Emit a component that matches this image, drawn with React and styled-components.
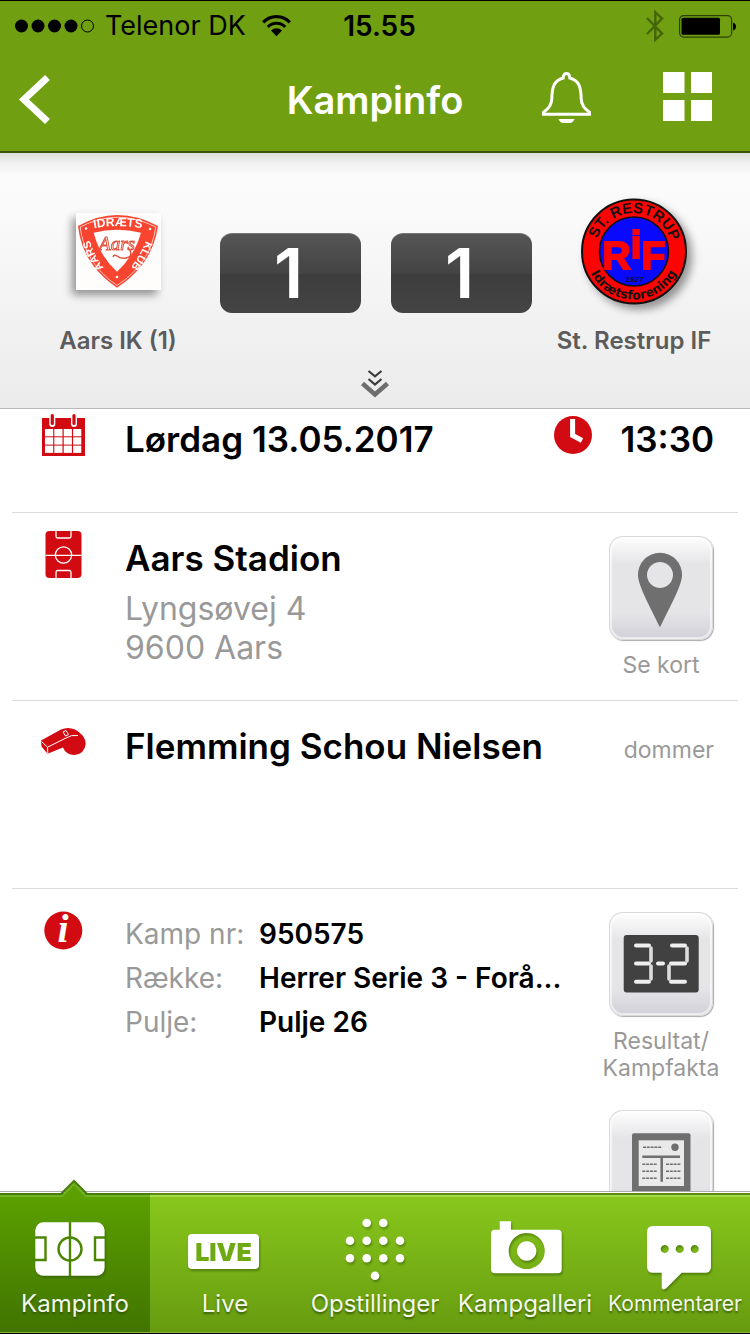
import React from "react";
import styled, { createGlobalStyle, css } from "styled-components";

const RED = "#d20a11";
const FONT = 'Inter, "Liberation Sans", sans-serif';

const GlobalStyle = createGlobalStyle`
  *, *::before, *::after { box-sizing: border-box; }
  body { margin: 0; background: #fff; font-family: ${FONT}; }
  button { font: inherit; color: inherit; border: 0; padding: 0; margin: 0; background: none; cursor: pointer; }
  h1, h2, p, dl, dd, dt { margin: 0; font-weight: inherit; font-size: inherit; }
  svg { display: block; overflow: visible; flex: none; }
`;

const Screen = styled.div`
  display: flex;
  flex-direction: column;
  height: 100vh;
  border-top: 1px solid #000;
  border-bottom: 1px solid #000;
  background: #fff;
`;

/* ---------- Top bars ---------- */

const TopBar = styled.header`
  flex: none;
  background: #70a011;
  border-bottom: 2px solid #3a5606;
`;

const StatusBar = styled.div`
  display: grid;
  grid-template-columns: 1fr auto 1fr;
  align-items: center;
  height: 50px;
  padding: 0 14px 0 15px;
  color: #000;
`;

const StatusGroup = styled.div`
  display: flex;
  align-items: center;
  gap: ${(p) => p.$gap}px;
  justify-content: ${(p) => (p.$end ? "flex-end" : "flex-start")};
`;

const Carrier = styled.span`
  padding-right: 6px;
  font-size: 27px;
  line-height: 32px;
`;

const Clock = styled.time`
  padding-left: 8px;
  font-size: 28px;
  line-height: 32px;
  font-weight: 600;
`;

const NavBar = styled.nav`
  display: grid;
  grid-template-columns: 1fr auto 1fr;
  align-items: center;
  height: 100px;
  padding: 0 38px 0 20px;
  color: #fff;
`;

const NavTitle = styled.h1`
  font-size: 38px;
  line-height: 44px;
  font-weight: 600;
  padding: 0 0 2px 18px;
`;

const NavActions = styled.div`
  display: flex;
  align-items: flex-start;
  justify-content: flex-end;
  gap: 72px;
  padding-bottom: 8px;
`;

/* ---------- Score ---------- */

const ScorePanel = styled.section`
  flex: none;
  display: flex;
  flex-direction: column;
  padding: 42px 14px 10px;
  border-bottom: 1px solid #b9b9b9;
  background: linear-gradient(#d9dfd8 0, #f0f0f0 10px, #fbfbfb 22px, #fafafa 60px, #ebebeb 100%);
`;

const ScoreGrid = styled.div`
  display: grid;
  grid-template-columns: 1fr auto 1fr;
  padding-left: 2px;
`;

const Team = styled.div`
  display: flex;
  flex-direction: column;
  align-items: center;
`;

const Crest = styled.div`
  display: flex;
  align-items: center;
  height: 112px;
`;

const TeamName = styled.h2`
  margin-top: 20px;
  font-size: 24px;
  line-height: 28px;
  font-weight: 600;
  color: #5c5c5c;
  white-space: nowrap;
`;

const Scores = styled.div`
  display: flex;
  gap: 30px;
  padding-top: 38px;
`;

const Goal = styled.div`
  display: flex;
  justify-content: center;
  width: 141px;
  height: 80px;
  padding-right: 4px;
  border-radius: 12px;
  border-top: 1px solid #777;
  background: linear-gradient(#555 0, #444 50%, #3d3d3d 51%, #444 100%);
  color: #fff;
  font-size: 69px;
  line-height: 78px;
  font-weight: 600;
`;

const Expand = styled.button`
  align-self: center;
  margin-top: 15px;
  height: 28px;
`;

/* ---------- Match details ---------- */

const Details = styled.main`
  flex: 1;
  min-height: 0;
  overflow-y: auto;
  scrollbar-width: none;
  padding: 0 12px;
`;

const Row = styled.section`
  display: grid;
  grid-template-columns: 102px 1fr auto;
  column-gap: 11px;
  align-items: start;
  min-height: ${(p) => (p.$first ? 104 : 188)}px;
  padding: ${(p) => (p.$first ? 2 : 17)}px 16px 0 0;
  border-bottom: 1px solid #dcdcdc;
  &:last-child { border-bottom: 0; }
`;

const RowIcon = styled.div`
  display: flex;
  justify-content: center;
`;

const RowTitle = styled.h2`
  font-size: 35px;
  line-height: 56px;
  font-weight: 600;
  color: #000;
  white-space: nowrap;
`;

const Address = styled.p`
  margin-top: 3px;
  font-size: 32px;
  line-height: 39px;
  color: #999;
`;

const Kickoff = styled.div`
  display: flex;
  align-items: center;
  gap: 28px;
  padding-right: 8px;
  svg { margin-bottom: 8px; }
`;

const Role = styled.p`
  padding: 4px 8px 0 0;
  font-size: 23px;
  line-height: 56px;
  color: #999;
`;

const Facts = styled.dl`
  display: grid;
  grid-template-columns: 134px 1fr;
  margin-top: 6px;
  font-size: 28px;
  line-height: 44px;
  white-space: nowrap;
  dt { color: #999; }
  dd { color: #000; font-weight: 600; }
`;

const Actions = styled.div`
  display: flex;
  flex-direction: column;
  gap: 28px;
  width: 122px;
  margin-left: -11px;
  padding-top: 6px;
`;

const Action = styled.button`
  display: flex;
  flex-direction: column;
  align-items: center;
  gap: 12px;
  font-size: 23px;
  line-height: 27px;
  color: #999;
`;

const ActionFace = styled.span`
  display: block;
  width: 104px;
  height: 104px;
  border-radius: 14px;
  background: linear-gradient(#fff 0, #e5e5e8 27%, #e5e5e8 74%, #d0cfd8 100%);
  box-shadow: inset 0 0 0 1px #d9d9d9, inset 0 0 0 3px rgba(255, 255, 255, 0.6), 1px 1px 1px #aaa;
`;

/* ---------- Tab bar ---------- */

const TabBar = styled.nav`
  position: relative;
  flex: none;
  display: grid;
  grid-template-columns: repeat(5, 1fr);
  padding-top: 1px;
  border-top: 1px solid #ababab;
  background: #fff;
`;

const Tab = styled.a`
  position: relative;
  display: flex;
  flex-direction: column;
  align-items: center;
  height: 140px;
  padding-top: 21px;
  border-top: 2px solid #5c8b0f;
  border-bottom: 1px solid #86b13a;
  background: linear-gradient(#88c81c, #679b10);
  box-shadow: inset 0 2px 0 #a6dc4c;
  color: #f3f8e8;
  text-decoration: none;
  ${(p) =>
    p.$active &&
    css`
      border-top-color: #477c08;
      background: linear-gradient(#5ba000, #417400);
      box-shadow: inset 0 2px 0 #74b422;
    `}
`;

const TabLabel = styled.span`
  font-size: ${(p) => (p.$compact ? 21 : 24)}px;
  line-height: 28px;
  white-space: nowrap;
  text-shadow: 0 2px 2px rgba(40, 70, 0, 0.7);
`;

const TabIcon = styled.svg`
  filter: drop-shadow(1px 2px 1px rgba(40, 70, 0, 0.45));
`;

const Pointer = styled.svg`
  position: absolute;
  top: -15px;
  left: 50%;
  margin-left: -14px;
`;

/* ---------- Drawings ---------- */

const SignalDots = () => (
  <svg width="80" height="14" viewBox="0 0 80 14" aria-hidden="true">
    {[6.5, 23, 39.5, 56].map((x) => (
      <circle key={x} cx={x} cy="7" r="6.5" />
    ))}
    <circle cx="72.5" cy="7" r="6" fill="none" stroke="#000" />
  </svg>
);

const Wifi = () => (
  <svg width="29" height="22" viewBox="0 0 29 22" aria-hidden="true">
    <path d="M1.2 7.3A18.5 18.5 0 0 1 27.8 7.3M5.8 12A12 12 0 0 1 23.2 12" fill="none" stroke="#000" strokeWidth="3.2" />
    <path d="M9 15.6a7.6 7.6 0 0 1 11 0L14.500 21.200Z" />
  </svg>
);

const Bluetooth = () => (
  <svg width="18" height="32" viewBox="0 0 18 32" aria-hidden="true">
    <path d="M1 8L16 23.500 9.300 29.800V2.200L16 8.500 1 24" fill="none" stroke="#456407" strokeWidth="2.400" />
  </svg>
);

const Battery = () => (
  <svg width="57" height="23" viewBox="0 0 57 23" aria-hidden="true">
    <rect x="0.600" y="0.600" width="52" height="21.500" rx="4" fill="none" stroke="#2c4005" strokeWidth="1.200" />
    <rect x="2.500" y="2.800" width="38.500" height="17" rx="1.500" />
    <path d="M54 7.500q3 1 3 4t-3 4Z" />
  </svg>
);

const BackIcon = () => (
  <svg width="30" height="49" viewBox="0 0 30 49" aria-hidden="true">
    <path d="M27.500 2.500L4 24.500 27.500 46.500" fill="none" stroke="#fff" strokeWidth="7" />
  </svg>
);

const BellIcon = () => (
  <svg width="49" height="51" viewBox="0 0 49 51" aria-hidden="true">
    <path
      d="M1.500 42.200V40.200Q9.500 35 9.800 27C10 15 12 8.500 21.200 6Q21.500 1.500 24.500 1.500T27.800 6C37 8.500 39 15 39.200 27Q39.500 35 47.500 40.200V42.200Z"
      fill="none"
      stroke="#fff"
      strokeWidth="3"
    />
    <path d="M16.500 47h16q-1.500 4-5 4h-6q-3.500 0-5-4Z" fill="#fff" />
  </svg>
);

const GridIcon = () => (
  <svg width="49" height="49" viewBox="0 0 49 49" fill="#fff" aria-hidden="true">
    <path d="M0 0h21.500v21H0ZM28 0h21v21H28ZM0 28h21.500v21H0ZM28 28h21v21H28Z" />
  </svg>
);

const ExpandIcon = () => (
  <svg width="28" height="28" viewBox="0 0 28 28" fill="none" aria-hidden="true">
    <path d="M7.500 1L14 6.300 20.500 1M7.500 9L14 14.500 20.500 9" stroke="#3c3c3c" strokeWidth="2.200" />
    <path d="M1.500 13.500L14 24.500 26.500 13.500" stroke="#6e6e6e" strokeWidth="4.500" />
  </svg>
);

const CrestDrawing = styled.svg`
  filter: drop-shadow(${(p) => p.$shadowX}px 5px 4px rgba(0, 0, 0, 0.4));
`;

const AarsCrest = () => (
  <CrestDrawing $shadowX={-4} width="85" height="77" viewBox="0 0 85 77" role="img" aria-label="Aars Idræts Klub">
    <defs>
      <path id="aars-top" d="M6 18Q41 8 78 18" />
      <path id="aars-left" d="M35 62Q18 48 10 15" />
      <path id="aars-right" d="M73.500 17Q66 45 44 66" />
    </defs>
    <rect width="85" height="77" fill="#fffdfb" />
    <path d="M2 13Q41-9 82 13Q77 51 41 74.700Q6 51 2 13Z" fill="#f9442f" />
    <path d="M4.200 14Q41-5.500 79.800 14Q75 50 41 72.500Q8.500 50 4.200 14Z" fill="none" stroke="#fff" strokeWidth="0.700" />
    <path d="M17.700 19.700Q41 14 65 19.700Q59 42 41 58.700Q23 42 17.700 19.700Z" fill="#fff" />
    <g fill="#fff" fontFamily="Liberation Sans" fontWeight="bold" fontSize="11" textAnchor="middle">
      <text fontSize="12"><textPath href="#aars-top" startOffset="50%">IDRÆTS</textPath></text>
      <text><textPath href="#aars-left" startOffset="48%">AARS</textPath></text>
      <text><textPath href="#aars-right" startOffset="46%">KLUB</textPath></text>
    </g>
    <text x="41" y="37" textAnchor="middle" fontFamily="Liberation Serif" fontStyle="italic" fontSize="19" fill="#fff" stroke="#e2533f" strokeWidth="1">Aars</text>
    <path d="M54 37q3 7-4 8-6 1-9-2-3-2-4 1" fill="none" stroke="#e2533f" strokeWidth="1.500" />
    <g fill="#fff">
      <circle cx="10" cy="15.500" r="1.300" />
      <circle cx="74" cy="16" r="1.300" />
      <circle cx="41" cy="64" r="1.300" />
    </g>
  </CrestDrawing>
);

const RestrupCrest = () => (
  <CrestDrawing $shadowX={5} width="106" height="107" viewBox="0 0 106 107" role="img" aria-label="St. Restrup Idrætsforening">
    <defs>
      <path id="restrup-top" d="M14.500 53.500A38.500 38.500 0 0 1 91.500 53.500" />
      <path id="restrup-bottom" d="M5 53.500A48 48 0 0 0 101 53.500" />
    </defs>
    <circle cx="53" cy="53.500" r="52" fill="#fb0404" stroke="#111" strokeWidth="2" />
    <circle cx="53" cy="53.500" r="34.500" fill="#0909fb" stroke="#111" strokeWidth="1.500" />
    <g textAnchor="middle" fontWeight="bold" fill="#111">
      <text fontFamily="Liberation Sans" fontSize="15"><textPath href="#restrup-top" startOffset="51%">ST. RESTRUP</textPath></text>
      <text fontFamily="DejaVu Sans" fontSize="12.500"><textPath href="#restrup-bottom" startOffset="50%">Idrætsforening</textPath></text>
    </g>
    <text x="53" y="71" textAnchor="middle" fontFamily="Liberation Sans" fontWeight="bold" fontSize="39" fill="#fb0404" stroke="#fb0404" strokeWidth="2">
      R<tspan dy="-11">i</tspan><tspan dy="11">F</tspan>
    </text>
    <text x="53" y="84" textAnchor="middle" fontFamily="Liberation Sans" fontStyle="italic" fontWeight="bold" fontSize="8" fill="#111">1927</text>
  </CrestDrawing>
);

const CalendarIcon = () => (
  <svg width="48" height="48" viewBox="0 0 48 48" aria-hidden="true">
    <rect x="3" y="7" width="43" height="38" fill={RED} />
    {[18, 26.3, 34.600].map((y) =>
      [6, 15.300, 24.700, 34.100].map((x) => <rect key={`${x}-${y}`} x={x} y={y} width="8.200" height="7.300" fill="#fff" />)
    )}
    {[13.300, 35].map((x) => (
      <g key={x} strokeLinecap="round">
        <path d={`M${x} 5V13`} stroke="#fff" strokeWidth="6" />
        <path d={`M${x} 4.500V12.500`} stroke={RED} strokeWidth="3.200" />
      </g>
    ))}
  </svg>
);

const PitchIcon = () => (
  <svg width="48" height="48" viewBox="0 0 48 48" aria-hidden="true">
    <rect x="6.500" y="1" width="36" height="47" rx="4" fill={RED} />
    <g fill="none" stroke="#fff" strokeWidth="1.300">
      <path d="M6.500 25.300H16M33 25.300H42.500M17 1V6.500Q17 8 18.500 8H30.500Q32 8 32 6.500V1M17 48V42.500Q17 40.500 18.500 40.500H30.500Q32 40.500 32 42.500V48M16 25.300H33" />
      <circle cx="24.500" cy="25" r="8.200" />
    </g>
  </svg>
);

const WhistleIcon = () => (
  <svg width="48" height="48" viewBox="0 0 48 48" aria-hidden="true">
    <path d="M2 22.500L22 11.500Q29 8.500 36 11.500Q46.500 17 46.700 26Q45.500 36 35.500 37Q27 37 24 29.500L8.500 35.800 2.500 28.500Z" fill={RED} />
    <path d="M2.500 23.500L8.500 29.200 8.800 35.500M8.500 29.200L27 20Q32 16.500 39 17.500M24 14l2.500 4 3-1.500-2.500-4Z" fill="none" stroke="#fff" strokeWidth="1" />
  </svg>
);

const ClockIcon = () => (
  <svg width="38" height="38" viewBox="0 0 38 38" aria-hidden="true">
    <circle cx="19" cy="19" r="19" fill={RED} />
    <path d="M18.600 3V19.500L28 24.500" fill="none" stroke="#fff" strokeWidth="5" />
  </svg>
);

const InfoIcon = () => (
  <svg width="48" height="48" viewBox="0 0 48 48" aria-hidden="true">
    <circle cx="24.300" cy="24.500" r="19" fill={RED} />
    <text x="24" y="36" textAnchor="middle" fontFamily="Liberation Serif" fontStyle="italic" fontWeight="bold" fontSize="40" fill="#fff">i</text>
  </svg>
);

const PinIcon = () => (
  <svg width="104" height="104" viewBox="0 0 104 104" aria-hidden="true">
    <path fillRule="evenodd" fill="#6f6f6f" d="M51 16.700A22 22 0 0 1 73 39C73 49 62 69 51 91.300C40 69 29 49 29 39A22 22 0 0 1 51 16.700ZM51 26a13 13 0 1 0 .01 0Z" />
  </svg>
);

const ScoreboardIcon = () => (
  <svg width="104" height="104" viewBox="0 0 104 104" aria-hidden="true">
    <rect x="14.700" y="23" width="75" height="57.500" rx="3" fill="#414141" />
    <g stroke="#efefef" strokeWidth="4" strokeLinecap="round">
      <path d="M27 33.500H40M27 51.500H40M27 69.700H40M49 51.500H54M63 33.500H76M62 51.500H76M62 69.700H76" />
      <path d="M42 36V49M42 54V67M78 36V49M60 54V67" stroke="#dcdcdc" strokeWidth="3.600" />
    </g>
  </svg>
);

const ReportIcon = () => (
  <svg width="104" height="104" viewBox="0 0 104 104" aria-hidden="true">
    <rect x="23" y="23.300" width="58.500" height="59.500" rx="2" fill="#6f6f6f" />
    <rect x="29.700" y="30.300" width="45.300" height="45.700" fill="#e9e9ea" />
    <circle cx="66" cy="37.300" r="3.700" fill="#6f6f6f" />
    <path d="M33.300 46.700H71M52.700 46.700V71.700" stroke="#6f6f6f" strokeWidth="2.500" />
    <path d="M34 37.300H53M33.300 54.300H48.500M33.300 61.300H48.500M33.300 68.300H48.500M57 54.300H71.500M57 61.300H71.500M57 68.300H71.500" stroke="#6f6f6f" strokeWidth="1.500" strokeDasharray="3 0.800" />
  </svg>
);

const tabIcons = {
  pitch: (
    <>
      <rect x="-3.700" y="6.300" width="69.300" height="53.500" rx="8" fill="#fff" />
      <g fill="none" stroke="#4c8500" strokeWidth="2.400">
        <path d="M31 6V60M-4 21.500H6.500V44H-4M66 21.500H56V44H66" />
        <circle cx="31" cy="33" r="11.500" fill="#fff" />
        <path d="M31 21V45" />
      </g>
    </>
  ),
  live: (
    <>
      <rect x="-1" y="18" width="71" height="35" rx="4" fill="#fff" />
      <text x="34.500" y="44.500" textAnchor="middle" fontFamily="Inter" fontWeight="900" fontSize="25" fill="#6faa14">LIVE</text>
    </>
  ),
  dots: (
    <g fill="#fff">
      {[
        [27.700, 7], [44.300, 7],
        [11, 24.700], [27.700, 24.700], [44.300, 24.700], [61, 24.700],
        [11, 42.300], [27.700, 42.300], [44.300, 42.300], [61, 42.300],
        [36, 59.700],
      ].map(([x, y]) => (
        <circle key={`${x}-${y}`} cx={x} cy={y} r="4.300" />
      ))}
    </g>
  ),
  camera: (
    <path
      fill="#fff"
      fillRule="evenodd"
      d="M6 13.700H10.700V5.300H22V13.700H68.700Q72.700 13.700 72.700 17.700V53.300Q72.700 57.300 68.700 57.300H6Q2 57.300 2 53.300V17.700Q2 13.700 6 13.700ZM37.700 17a18 18 0 1 0 .01 0ZM37.700 25.300a9.700 9.700 0 1 1-.01 0Z"
    />
  ),
  chat: (
    <path
      fill="#fff"
      fillRule="evenodd"
      d="M14 10H66Q72 10 72 16V50.700Q72 56.700 66 56.700H42.700L27 72.500Q22.700 75 22.700 71V56.700H14Q8 56.700 8 50.700V16Q8 10 14 10ZM25.700 29a4 4 0 1 0 .01 0ZM40.700 29a4 4 0 1 0 .01 0ZM55.700 29a4 4 0 1 0 .01 0Z"
    />
  ),
};

const tabs = [
  { label: "Kampinfo", icon: "pitch", active: true },
  { label: "Live", icon: "live" },
  { label: "Opstillinger", icon: "dots" },
  { label: "Kampgalleri", icon: "camera" },
  { label: "Kommentarer", icon: "chat", compact: true },
];

export default function App() {
  return (
    <>
      <GlobalStyle />
      <Screen>
        <TopBar>
          <StatusBar>
            <StatusGroup $gap={10}>
              <SignalDots />
              <Carrier>Telenor DK</Carrier>
              <Wifi />
            </StatusGroup>
            <Clock>15.55</Clock>
            <StatusGroup $gap={15} $end>
              <Bluetooth />
              <Battery />
            </StatusGroup>
          </StatusBar>
          <NavBar>
            <div>
              <button type="button" aria-label="Tilbage"><BackIcon /></button>
            </div>
            <NavTitle>Kampinfo</NavTitle>
            <NavActions>
              <button type="button" aria-label="Notifikationer"><BellIcon /></button>
              <button type="button" aria-label="Menu"><GridIcon /></button>
            </NavActions>
          </NavBar>
        </TopBar>

        <ScorePanel>
          <ScoreGrid>
            <Team>
              <Crest><AarsCrest /></Crest>
              <TeamName>Aars IK (1)</TeamName>
            </Team>
            <Scores>
              <Goal>1</Goal>
              <Goal>1</Goal>
            </Scores>
            <Team>
              <Crest><RestrupCrest /></Crest>
              <TeamName>St. Restrup IF</TeamName>
            </Team>
          </ScoreGrid>
          <Expand type="button" aria-label="Vis mere"><ExpandIcon /></Expand>
        </ScorePanel>

        <Details>
          <Row $first>
            <RowIcon><CalendarIcon /></RowIcon>
            <RowTitle>Lørdag 13.05.2017</RowTitle>
            <Kickoff>
              <ClockIcon />
              <RowTitle as="time">13:30</RowTitle>
            </Kickoff>
          </Row>

          <Row>
            <RowIcon><PitchIcon /></RowIcon>
            <div>
              <RowTitle>Aars Stadion</RowTitle>
              <Address>
                Lyngsøvej 4<br />
                9600 Aars
              </Address>
            </div>
            <Actions>
              <Action type="button">
                <ActionFace><PinIcon /></ActionFace>
                Se kort
              </Action>
            </Actions>
          </Row>

          <Row>
            <RowIcon><WhistleIcon /></RowIcon>
            <RowTitle>Flemming Schou Nielsen</RowTitle>
            <Role>dommer</Role>
          </Row>

          <Row>
            <RowIcon><InfoIcon /></RowIcon>
            <Facts>
              <dt>Kamp nr:</dt>
              <dd>950575</dd>
              <dt>Række:</dt>
              <dd>Herrer Serie 3 - Forå...</dd>
              <dt>Pulje:</dt>
              <dd>Pulje 26</dd>
            </Facts>
            <Actions>
              <Action type="button">
                <ActionFace><ScoreboardIcon /></ActionFace>
                <span>Resultat/<br />Kampfakta</span>
              </Action>
              <Action type="button" aria-label="Kamprapport">
                <ActionFace><ReportIcon /></ActionFace>
              </Action>
            </Actions>
          </Row>
        </Details>

        <TabBar>
          {tabs.map((tab) => (
            <Tab key={tab.label} href={`#${tab.icon}`} $active={tab.active} aria-current={tab.active ? "page" : undefined}>
              {tab.active && (
                <Pointer width="28" height="18" viewBox="0 0 28 18" aria-hidden="true">
                  <path d="M1 15L13 2 25 15V18H1Z" fill="#5ba000" />
                  <path d="M0 14L13 1 26 14" fill="none" stroke="#477c08" strokeWidth="2.200" />
                  <path d="M1 16.500L13 4 25 16.500" fill="none" stroke="#74b422" strokeWidth="1.500" />
                </Pointer>
              )}
              <TabIcon width="72" height="74" viewBox="0 0 72 74" aria-hidden="true">{tabIcons[tab.icon]}</TabIcon>
              <TabLabel $compact={tab.compact}>{tab.label}</TabLabel>
            </Tab>
          ))}
        </TabBar>
      </Screen>
    </>
  );
}
